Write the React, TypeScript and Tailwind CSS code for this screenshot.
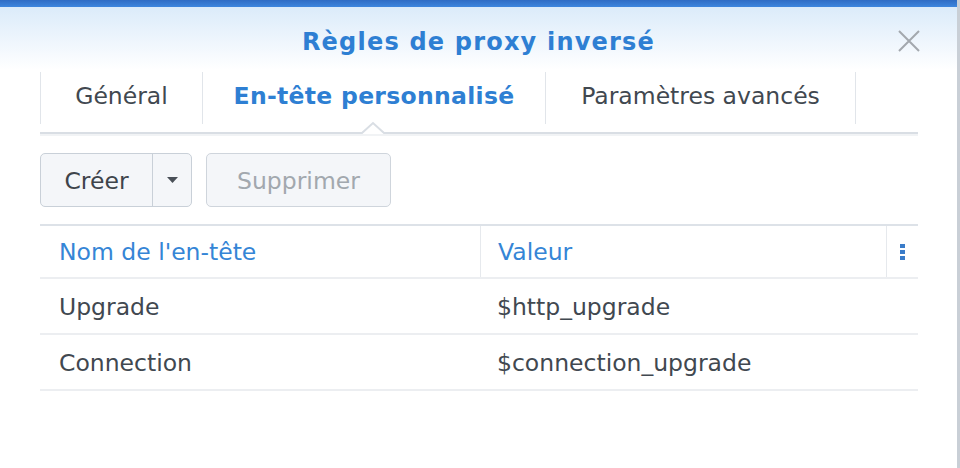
import React from "react";

const tabs = [
  { label: "Général", active: false, w: "w-[162px]" },
  { label: "En-tête personnalisé", active: true, w: "w-[343px]" },
  { label: "Paramètres avancés", active: false, w: "w-[310px]" },
];

const rows = [
  { name: "Upgrade", value: "$http_upgrade" },
  { name: "Connection", value: "$connection_upgrade" },
];

const App = () => {
  return (
    <div className="w-[960px] h-[468px] overflow-hidden bg-white border-r-[3px] border-[#c9cfd6] font-['DejaVu_Sans',sans-serif] text-[#414850]">
      <div className="h-[7px] bg-gradient-to-b from-[#2f6cc4] to-[#3d86de]" />
      <div className="relative h-[63px] bg-gradient-to-b from-[#dbebfa] to-white flex items-center justify-center">
        <h1 className="font-bold text-[24px] text-[#2e7fd3] tracking-[1.2px] pt-[6px]">
          Règles de proxy inversé
        </h1>
        <button className="absolute right-[35px] top-[21px] w-[26px] h-[26px] flex items-center justify-center">
          <svg width="24" height="24" viewBox="0 0 24 24">
            <path d="M2 2 L22 22 M22 2 L2 22" stroke="#a3a8ae" strokeWidth="2" />
          </svg>
        </button>
      </div>

      <div className="pl-[40px] pr-[39px]">
        {/* tabs */}
        <div className="relative h-[64px] pt-[2px]">
          <div className="flex h-[52px] border-l border-[#e1e5ea]">
            {tabs.map((t) => (
              <div
                key={t.label}
                className={`${t.w} flex items-center justify-center border-r border-[#e1e5ea] text-[23.5px] pb-[2px] ${
                  t.active ? "font-bold text-[#2e7fd3] tracking-[0.3px]" : "text-[#414850]"
                }`}
              >
                {t.label}
              </div>
            ))}
          </div>
          <svg className="absolute left-0 bottom-[-2px]" width="878" height="16" viewBox="0 0 878 16">
            <path d="M0 13 L322 13 L333 3 L344 13 L878 13" fill="none" stroke="#d9dee4" strokeWidth="2" />
            <path d="M0 15 L878 15" fill="none" stroke="#f1f3f5" strokeWidth="2" />
          </svg>
        </div>

        {/* toolbar */}
        <div className="flex gap-[14px] mt-[19px]">
          <div className="flex h-[54px] rounded-[5px] border border-[#c9d0d8] bg-[#f4f6f9]">
            <div className="w-[112px] flex items-center justify-center pt-[3px] text-[23.5px] text-[#3e444b] border-r border-[#c9d0d8]">
              Créer
            </div>
            <div className="w-[38px] flex items-center justify-center">
              <svg width="11" height="6" viewBox="0 0 11 6">
                <path d="M0 0 L11 0 L5.5 6 Z" fill="#4a5058" />
              </svg>
            </div>
          </div>
          <div className="w-[185px] h-[54px] rounded-[5px] border border-[#cfd5dc] bg-[#f4f6f9] flex items-center justify-center pt-[3px] text-[23.5px] text-[#a2a8ae]">
            Supprimer
          </div>
        </div>

        {/* table */}
        <div className="mt-[17px] border-t-2 border-[#dde2e8]">
          <div className="flex h-[53px] border-b-2 border-[#eceef1] text-[23.5px] text-[#3585d6]">
            <div className="w-[440px] pl-[19px] flex items-center pt-[2px]">Nom de l&apos;en-tête</div>
            <div className="w-[406px] pl-[17px] flex items-center border-l border-[#e6e9ed] pt-[2px]">Valeur</div>
            <div className="flex-1 flex items-center justify-center border-l border-[#e6e9ed]">
              <svg width="5" height="16" viewBox="0 0 5 16">
                <rect x="0" y="0" width="5" height="4" fill="#3a7cc9" />
                <rect x="0" y="6" width="5" height="4" fill="#3a7cc9" />
                <rect x="0" y="12" width="5" height="4" fill="#3a7cc9" />
              </svg>
            </div>
          </div>
          {rows.map((r) => (
            <div key={r.name} className="flex h-[56px] border-b-2 border-[#eceef1] text-[23.5px]">
              <div className="w-[440px] pl-[19px] flex items-center pt-[4px]">{r.name}</div>
              <div className="pl-[17px] flex items-center pt-[4px]">{r.value}</div>
            </div>
          ))}
        </div>
      </div>
    </div>
  );
};

export default App;
